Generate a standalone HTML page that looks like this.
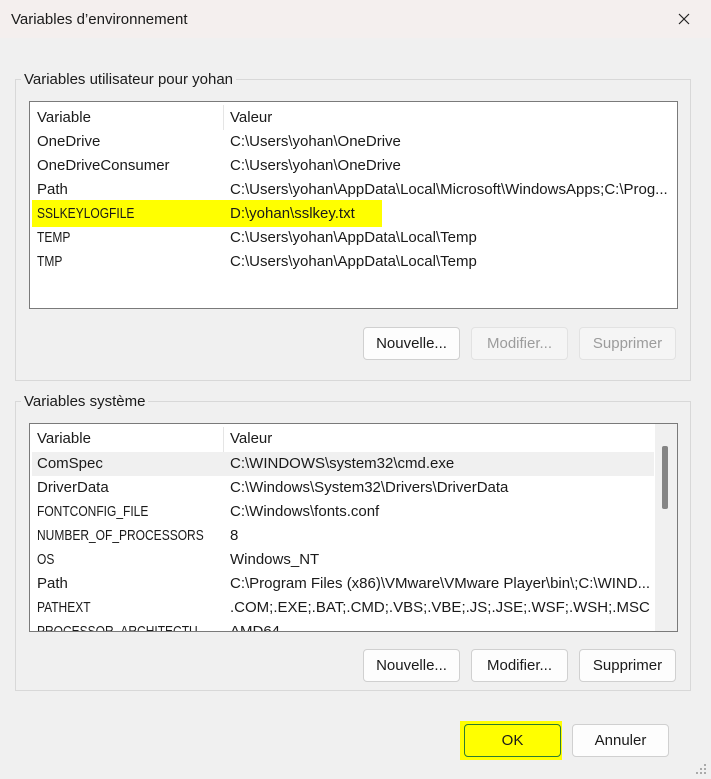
<!DOCTYPE html>
<html><head><meta charset="utf-8"><style>
*{margin:0;padding:0;box-sizing:border-box}
body{width:711px;height:779px;background:#f0f0f0;font-family:"Liberation Sans",sans-serif;font-size:15px;color:#1a1a1a;position:relative;overflow:hidden}
.abs{position:absolute}
.title{left:0;top:0;width:711px;height:38px;background:#f4efee}
.grp{border:1px solid #d8d8d8}
.lbl{background:#f0f0f0;padding:0 3px;font-size:15px;white-space:nowrap}
.list{background:#fff;border:1px solid #7a7a7a;overflow:hidden}
.t{position:absolute;white-space:nowrap;font-size:15px;line-height:26px}
.c{transform:scaleX(0.8);transform-origin:left center}
.btn{position:absolute;width:97px;height:33px;border:1px solid #d0d0d0;border-radius:4px;background:#fdfdfd;text-align:center;line-height:32px;font-size:15px;color:#1a1a1a}
.dis{color:#9c9c9c;background:#f5f5f5;border-color:#e2e2e2}
</style></head><body>
<div class="abs title"></div>
<div class="abs" style="left:11px;top:11px;font-size:15px">Variables d’environnement</div>
<svg class="abs" style="left:678px;top:13px" width="12" height="12"><path d="M1 1L11 11M11 1L1 11" stroke="#222" stroke-width="1.2"/></svg>

<div class="abs grp" style="left:15px;top:79px;width:676px;height:302px"></div>
<div class="abs lbl" style="left:21px;top:71px">Variables utilisateur pour yohan</div>
<div class="abs list" style="left:29px;top:101px;width:649px;height:208px">
<div class="abs" style="left:193px;top:3px;width:1px;height:25px;background:#e5e5e5"></div>
<div class="abs" style="left:2px;top:98px;width:350px;height:27px;background:#ffff00"></div>
<div class="t" style="left:7px;top:3px">Variable</div><div class="t" style="left:200px;top:3px">Valeur</div>
<div class="t" style="left:7px;top:27px">OneDrive</div><div class="t" style="left:200px;top:27px">C:\Users\yohan\OneDrive</div>
<div class="t" style="left:7px;top:51px">OneDriveConsumer</div><div class="t" style="left:200px;top:51px">C:\Users\yohan\OneDrive</div>
<div class="t" style="left:7px;top:75px">Path</div><div class="t" style="left:200px;top:75px">C:\Users\yohan\AppData\Local\Microsoft\WindowsApps;C:\Prog...</div>
<div class="t c" style="left:7px;top:99px">SSLKEYLOGFILE</div><div class="t" style="left:200px;top:99px">D:\yohan\sslkey.txt</div>
<div class="t c" style="left:7px;top:123px">TEMP</div><div class="t" style="left:200px;top:123px">C:\Users\yohan\AppData\Local\Temp</div>
<div class="t c" style="left:7px;top:147px">TMP</div><div class="t" style="left:200px;top:147px">C:\Users\yohan\AppData\Local\Temp</div>
</div>
<div class="btn" style="left:363px;top:327px">Nouvelle...</div>
<div class="btn dis" style="left:471px;top:327px">Modifier...</div>
<div class="btn dis" style="left:579px;top:327px">Supprimer</div>

<div class="abs grp" style="left:15px;top:401px;width:676px;height:290px"></div>
<div class="abs lbl" style="left:21px;top:393px">Variables système</div>
<div class="abs list" style="left:29px;top:423px;width:649px;height:209px">
<div class="abs" style="left:193px;top:3px;width:1px;height:25px;background:#e5e5e5"></div>
<div class="abs" style="left:2px;top:28px;width:622px;height:24px;background:#f0f0f0"></div>
<div class="abs" style="left:625px;top:0;width:23px;height:208px;background:#f0f0f0"></div>
<div class="abs" style="left:632px;top:22px;width:6px;height:63px;background:#858585;border-radius:2px"></div>
<div class="t" style="left:7px;top:2px">Variable</div><div class="t" style="left:200px;top:2px">Valeur</div>
<div class="t" style="left:7px;top:27px">ComSpec</div><div class="t" style="left:200px;top:27px">C:\WINDOWS\system32\cmd.exe</div>
<div class="t" style="left:7px;top:51px">DriverData</div><div class="t" style="left:200px;top:51px">C:\Windows\System32\Drivers\DriverData</div>
<div class="t c" style="left:7px;top:75px">FONTCONFIG_FILE</div><div class="t" style="left:200px;top:75px">C:\Windows\fonts.conf</div>
<div class="t c" style="left:7px;top:99px">NUMBER_OF_PROCESSORS</div><div class="t" style="left:200px;top:99px">8</div>
<div class="t c" style="left:7px;top:123px">OS</div><div class="t" style="left:200px;top:123px">Windows_NT</div>
<div class="t" style="left:7px;top:147px">Path</div><div class="t" style="left:200px;top:147px">C:\Program Files (x86)\VMware\VMware Player\bin\;C:\WIND...</div>
<div class="t c" style="left:7px;top:171px">PATHEXT</div><div class="t" style="left:200px;top:171px">.COM;.EXE;.BAT;.CMD;.VBS;.VBE;.JS;.JSE;.WSF;.WSH;.MSC</div>
<div class="t c" style="left:7px;top:195px">PROCESSOR_ARCHITECTU...</div><div class="t" style="left:200px;top:195px">AMD64</div>
</div>
<div class="btn" style="left:363px;top:649px">Nouvelle...</div>
<div class="btn" style="left:471px;top:649px">Modifier...</div>
<div class="btn" style="left:579px;top:649px">Supprimer</div>

<div class="abs" style="left:460px;top:721px;width:102px;height:39px;background:#ffff00"></div>
<div class="btn" style="left:464px;top:724px;background:#ffff00;border-color:#2f7d2f">OK</div>
<div class="btn" style="left:572px;top:724px">Annuler</div>
<svg class="abs" style="left:696px;top:764px" width="12" height="12"><g fill="#aaa"><rect x="8" y="0" width="2" height="2"/><rect x="4" y="4" width="2" height="2"/><rect x="8" y="4" width="2" height="2"/><rect x="0" y="8" width="2" height="2"/><rect x="4" y="8" width="2" height="2"/><rect x="8" y="8" width="2" height="2"/></g></svg>
</body></html>
